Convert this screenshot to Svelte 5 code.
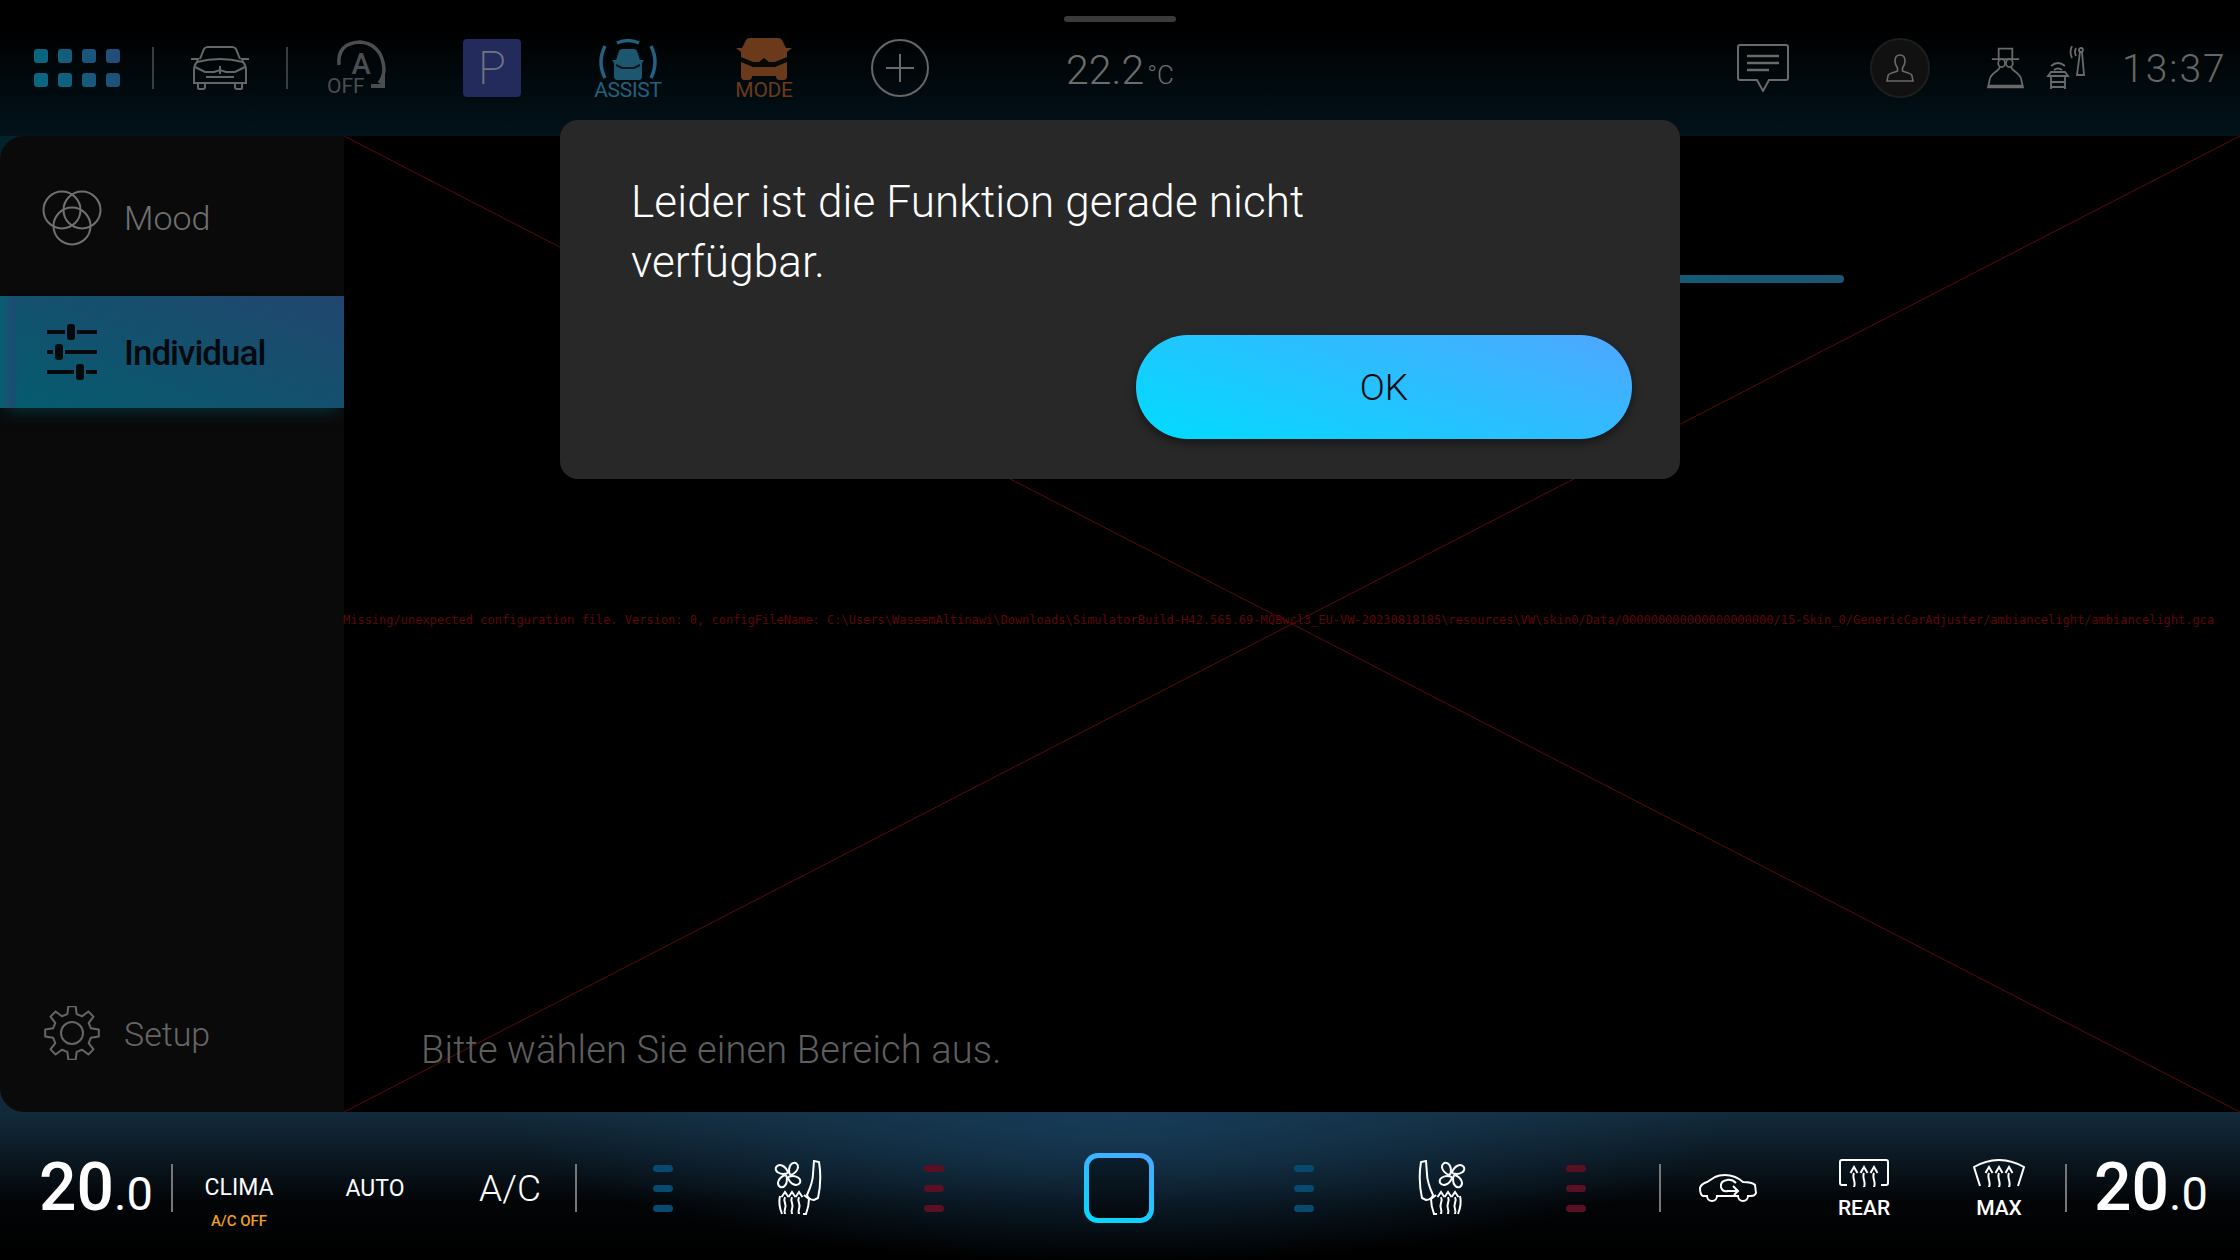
<script>
	const errorText =
		'Missing/unexpected configuration file. Version: 0, configFileName: C:\\Users\\WaseemAltinawi\\Downloads\\SimulatorBuild-H42.565.69-MQBwcl3_EU-VW-20230818185\\resources\\VW\\skin0/Data/000000000000000000000/15-Skin_0/GenericCarAdjuster/ambiancelight/ambiancelight.gca';

	const grid = [];
	for (const y of [0, 24]) for (const x of [0, 24, 48, 72]) grid.push({ x, y });

	// gear outline, 8 teeth
	function gearPoints() {
		const pts = [];
		const teeth = 8;
		for (let i = 0; i < teeth; i++) {
			const a = (i / teeth) * Math.PI * 2 - Math.PI / 2;
			const w = Math.PI / teeth;
			for (const [r, d] of [[19.5, -0.62], [27, -0.34], [27, 0.34], [19.5, 0.62]]) {
				const t = a + d * w;
				pts.push((28 + r * Math.cos(t)).toFixed(1) + ',' + (27 + r * Math.sin(t)).toFixed(1));
			}
		}
		return pts.join(' ');
	}
	const wave = 'M-3.5 6 L0 0 L3.5 6 M0 6 C-2.5 11 2.5 15 0 20 C-1 23 0 25 0 26';
	const petal = 'M15 13 C9 9 8 3 12 1 C17 0 20 6 17 13 Z';
</script>

<div class="screen">
	<header class="top">
		<div class="handle"></div>
		<div class="slot start apps">
			<svg width="86" height="38" viewBox="0 0 86 38">
				<defs>
					<linearGradient id="appsGrad" gradientUnits="userSpaceOnUse" x1="0" y1="38" x2="86" y2="0">
						<stop offset="0" stop-color="#066a80" />
						<stop offset="1" stop-color="#234c78" />
					</linearGradient>
				</defs>
				{#each grid as g}
					<rect x={g.x} y={g.y} width="14" height="14" rx="3" fill="url(#appsGrad)" />
				{/each}
			</svg>
		</div>
		<div class="rule dim"></div>
		<div class="slot">
			<svg width="60" height="44" viewBox="0 0 60 44" fill="none" stroke="#666" stroke-width="2">
				<path d="M10 13 L14 3 Q15 1 18 1 H42 Q45 1 46 3 L50 13 M1 13 H8 L7 16 M59 13 H52 L53 16" />
				<path d="M7 16 Q4 19 4 24 V37 H56 V24 Q56 19 53 16 Q30 10 7 16 Z" />
				<path d="M5 21 L15 26 H24 L30 24 L36 26 H45 L55 21 M30 20 V28 M8 37 V42 Q8 43 10 43 H13 Q15 43 15 41 V37 M45 37 V41 Q45 43 47 43 H50 Q52 43 52 42 V37 M16 31 H44" />
			</svg>
		</div>
		<div class="rule dim"></div>
		<div class="slot">
			<svg width="60" height="66" viewBox="0 -6 60 66" fill="none">
				<path d="M13 24 Q11 2 34 1 Q56 3 58 28 Q58 36 53 42" stroke="#4a4e50" stroke-width="3.5" />
				<path d="M45 45 H57 V34" stroke="#4a4e50" stroke-width="4" />
				<text x="35" y="33" text-anchor="middle" class="a-glyph">A</text>
				<text x="1" y="52" class="off">OFF</text>
			</svg>
		</div>
		<div class="slot"><div class="park">P</div></div>
		<div class="slot stack assist">
			<svg width="60" height="42" viewBox="0 0 60 42" fill="none">
				<path d="M19 5 Q30 0 41 5 M7 8 Q-1 24 7 40 M53 8 Q61 24 53 40" stroke="#24607f" stroke-width="3.5" />
				<path d="M14 22 H18 L21 13 Q22 11 24 11 H36 Q38 11 39 13 L42 22 H46 L44 25 V38 Q44 42 41 42 H19 Q16 42 16 38 V25 Z" fill="#1d566f" />
				<path d="M18 27 L24 30 H36 L42 27" stroke="#04141c" stroke-width="2" />
			</svg>
			<span class="icon-label">ASSIST</span>
		</div>
		<div class="slot stack mode">
			<svg width="58" height="42" viewBox="0 0 58 42">
				<path d="M1 10 H7 L11 2 Q12 0 15 0 H43 Q46 0 47 2 L51 10 H57 L52 14 V38 Q52 42 49 42 H44 Q41 42 41 38 H17 Q17 42 14 42 H9 Q6 42 6 38 V14 Z" fill="#6b3a1b" />
				<path d="M6 19 L18 24 H24 L29 20 L34 24 H40 L52 19 V24 L40 29 H18 L6 24 Z" fill="#070808" />
			</svg>
			<span class="icon-label">MODE</span>
		</div>
		<div class="slot">
			<div class="plus">
				<svg width="28" height="28" viewBox="0 0 28 28" stroke="#6a6a6a" stroke-width="2"><path d="M0 14 H28 M14 0 V28" /></svg>
			</div>
		</div>
		<div class="slot outside">22.2<small>°C</small></div>
		<div></div>
		<div class="slot">
			<svg width="52" height="48" viewBox="0 0 52 48" fill="none" stroke="#6a6a6a" stroke-width="2">
				<path d="M3 1 H49 Q51 1 51 3 V34 Q51 36 49 36 H32 L26 47 L20 36 H3 Q1 36 1 34 V3 Q1 1 3 1 Z" />
				<path d="M10 12 H42 M10 19 H42 M10 26 H32" stroke-width="2.5" />
			</svg>
		</div>
		<div class="slot">
			<div class="profile">
				<svg width="28" height="28" viewBox="0 0 28 28" fill="none" stroke="#6a6a6a" stroke-width="1.6">
					<path d="M14 1 C10 1 9 4 9 7 C9 10 10 12 11.5 14 V17 C7 19 2 19 2 22 L1 27 H27 L26 22 C26 19 21 19 16.5 17 V14 C18 12 19 10 19 7 C19 4 18 1 14 1 Z" />
				</svg>
			</div>
		</div>
		<div class="slot">
			<svg width="38" height="42" viewBox="0 0 38 42" fill="none" stroke="#6a6a6a" stroke-width="1.8">
				<path d="M12 1 H26 V12 H12 Z M5 12 H33" />
				<ellipse cx="15" cy="16" rx="3.5" ry="4" />
				<ellipse cx="23" cy="16" rx="3.5" ry="4" />
				<path d="M13 20 C13 24 4 26 3 32 L1 41 H37 L35 32 C34 26 25 24 25 20 M1 39 H37" />
			</svg>
		</div>
		<div class="slot">
			<svg width="40" height="44" viewBox="0 0 40 44" fill="none" stroke="#6a6a6a" stroke-width="1.8">
				<path d="M5 20 Q12 14 19 20 M8 24 Q12 21 16 24" />
				<path d="M2 30 H22 L19 26 H5 Z M5 31 V43 M19 31 V43 M5 36 H19 M5 41 H19" />
				<path d="M26 12 Q23 6 26 0 M30 10 Q28 6 30 2" />
				<path d="M34 6 L31 29 H38 L36 6 Z" />
				<circle cx="35" cy="4" r="2" />
			</svg>
		</div>
		<div class="slot start clock">13:37</div>
	</header>

	<div class="middle">
		<aside class="side">
			<div class="item mood">
				<svg class="item-icon" width="60" height="56" viewBox="0 0 60 56" fill="none" stroke="#707070" stroke-width="2">
					<circle cx="20" cy="20" r="18.5" />
					<circle cx="40" cy="20" r="18.5" />
					<circle cx="30" cy="36" r="18.5" />
				</svg>
				<span>Mood</span>
			</div>
			<div class="item active">
				<svg class="item-icon" width="50" height="56" viewBox="0 0 50 56" fill="#03090d">
					<rect x="0" y="6" width="50" height="4" />
					<rect x="0" y="26" width="50" height="4" />
					<rect x="0" y="46" width="50" height="4" />
					<rect x="18" y="4" width="12" height="8" fill="#18506e" />
					<rect x="6" y="24" width="12" height="8" fill="#11566d" />
					<rect x="27" y="44" width="12" height="8" fill="#0f586f" />
					<rect x="20" y="0" width="8" height="16" rx="3" />
					<rect x="8" y="20" width="8" height="16" rx="3" />
					<rect x="29" y="40" width="8" height="16" rx="3" />
				</svg>
				<span>Individual</span>
			</div>
			<div class="item setup">
				<svg class="item-icon" width="56" height="54" viewBox="0 0 56 54" fill="none" stroke="#666" stroke-width="2">
					<polygon points={gearPoints()} stroke-linejoin="round" />
					<circle cx="28" cy="27" r="11" />
				</svg>
				<span>Setup</span>
			</div>
		</aside>

		<main class="canvas">
			<svg class="cross" viewBox="0 0 1896 976" preserveAspectRatio="none">
				<path d="M0 0 L1896 976 M0 976 L1896 0" stroke="#5c0a0a" stroke-width="1" fill="none" />
			</svg>
			<div class="error">{errorText}</div>
			<div class="slider"></div>
			<p class="prompt">Bitte wählen Sie einen Bereich aus.</p>
		</main>
	</div>

	<footer class="climate">
		<div class="temp left">20<small>.0</small></div>
		<div class="rule"></div>
		<div class="slot stack clima"><span class="label">CLIMA</span><span class="acoff">A/C OFF</span></div>
		<div class="slot"><span class="label">AUTO</span></div>
		<div class="slot"><span class="ac">A/C</span></div>
		<div class="rule"></div>
		<div class="slot"><div class="bars blue"><i></i><i></i><i></i></div></div>
		<div class="slot">
			<svg width="50" height="56" viewBox="0 0 50 56" fill="none" stroke="#fff" stroke-width="2">
				{#each [45, 135, 225, 315] as deg}
					<path d={petal} transform="rotate({deg} 15 15)" />
				{/each}
				<path d="M41 1 L46 2 Q49 20 45 38 L41 40 Q36 40 34 35 Q40 22 40 14 Z" />
				{#each [12, 19, 26] as x}
					<path d={wave} transform="translate({x} 32) scale(1 .85)" />
				{/each}
				<path d="M7 36 Q5 44 9 54 M31 35 L36 39 Q36 46 33 54 H30" />
			</svg>
		</div>
		<div class="slot"><div class="bars red"><i></i><i></i><i></i></div></div>
		<div class="slot"><div class="zone"></div></div>
		<div class="slot"><div class="bars blue"><i></i><i></i><i></i></div></div>
		<div class="slot">
			<svg class="mirror" width="50" height="56" viewBox="0 0 50 56" fill="none" stroke="#fff" stroke-width="2">
				{#each [45, 135, 225, 315] as deg}
					<path d={petal} transform="rotate({deg} 15 15)" />
				{/each}
				<path d="M41 1 L46 2 Q49 20 45 38 L41 40 Q36 40 34 35 Q40 22 40 14 Z" />
				{#each [12, 19, 26] as x}
					<path d={wave} transform="translate({x} 32) scale(1 .85)" />
				{/each}
				<path d="M7 36 Q5 44 9 54 M31 35 L36 39 Q36 46 33 54 H30" />
			</svg>
		</div>
		<div class="slot"><div class="bars red"><i></i><i></i><i></i></div></div>
		<div class="rule"></div>
		<div class="slot">
			<svg width="58" height="28" viewBox="0 0 58 28" fill="none" stroke="#fff" stroke-width="2">
				<path d="M1 14 Q2 10 8 8 L16 3 Q20 1 26 1 Q36 1 44 8 Q53 8 56 11 L57 19 Q56 22 52 22 H49 A5 5 0 0 1 39 22 H18 A5 5 0 0 1 8 22 H4 Q1 21 1 14 Z" />
				<path d="M37 9 Q33 5 28 6 Q21 7 22 13 Q23 18 29 17 H38 M34 12 L39 17 L35 21" />
			</svg>
		</div>
		<div class="slot stack defrost">
			<svg width="50" height="28" viewBox="0 0 50 28" fill="none" stroke="#fff" stroke-width="2">
				<path d="M8 26 H3 Q1 26 1 24 V3 Q1 1 3 1 H47 Q49 1 49 3 V24 Q49 26 47 26 H42" />
				{#each [15, 25, 35] as x}
					<path d={wave} transform="translate({x} 8)" />
				{/each}
			</svg>
			<span class="label small">REAR</span>
		</div>
		<div class="slot stack defrost">
			<svg width="52" height="28" viewBox="0 0 52 28" fill="none" stroke="#fff" stroke-width="2">
				<path d="M7 27 L1 8 Q26 -6 51 8 L45 27" />
				{#each [16, 26, 36] as x}
					<path d={wave} transform="translate({x} 8)" />
				{/each}
			</svg>
			<span class="label small">MAX</span>
		</div>
		<div class="rule"></div>
		<div class="temp right">20<small>.0</small></div>
	</footer>

	<div class="dialog">
		<p>Leider ist die Funktion gerade nicht verfügbar.</p>
		<button>OK</button>
	</div>
</div>

<style>
	:global(body) {
		background: #000;
	}

	.screen {
		position: relative;
		width: 2240px;
		height: 1260px;
		display: flex;
		flex-direction: column;
		overflow: hidden;
		font-family: Roboto, 'Noto Sans', sans-serif;
		background: #000;
	}

	.slot {
		display: flex;
		align-items: center;
		justify-content: center;
		min-width: 0;
	}

	.slot.start {
		justify-content: flex-start;
	}

	.stack {
		flex-direction: column;
	}

	.rule {
		width: 2px;
		height: 48px;
		align-self: center;
		background: #777;
	}

	.rule.dim {
		height: 42px;
		background: #3a3d3e;
	}

	/* top bar */
	.top {
		position: relative;
		height: 136px;
		flex: none;
		display: grid;
		grid-template-columns: 152px 2px 132px 2px 136px 136px 136px 136px 136px 304px 441px 100px 174px 37px 84px 132px;
		background: linear-gradient(#000 20%, #02131a);
	}

	.handle {
		position: absolute;
		left: 1064px;
		top: 16px;
		width: 112px;
		height: 6px;
		border-radius: 3px;
		background: #3a3a3a;
	}

	.apps {
		padding-left: 34px;
	}

	.park {
		width: 58px;
		height: 58px;
		border-radius: 4px;
		background: #232a5c;
		color: #72757f;
		font-size: 46px;
		font-weight: 200;
		line-height: 58px;
		text-align: center;
	}

	.a-glyph {
		font-size: 29px;
		font-weight: 500;
		fill: #4a4e50;
	}

	.off {
		font-size: 21px;
		fill: #4a4e50;
	}

	.icon-label {
		font-size: 21px;
		line-height: 18px;
		margin-top: 1px;
		letter-spacing: -0.3px;
	}

	.assist .icon-label {
		color: #24607f;
	}

	.mode .icon-label {
		color: #6b3a1b;
	}

	.plus {
		width: 58px;
		height: 58px;
		border: 2px solid #666;
		border-radius: 50%;
		box-sizing: border-box;
		display: flex;
		align-items: center;
		justify-content: center;
	}

	.outside {
		color: #6c6c6c;
		font-size: 41px;
		font-weight: 300;
		align-items: baseline;
		padding-top: 45px;
		line-height: 50px;
	}

	.outside small {
		font-size: 26px;
		margin-left: 3px;
	}

	.profile {
		width: 60px;
		height: 60px;
		border-radius: 50%;
		background: #111;
		border: 2px solid #1e1e1e;
		display: flex;
		align-items: center;
		justify-content: center;
		box-sizing: border-box;
	}

	.clock {
		color: #666;
		font-size: 39px;
		font-weight: 300;
		letter-spacing: 2px;
		padding: 2px 0 0 14px;
	}

	/* middle */
	.middle {
		flex: 1;
		display: flex;
		min-height: 0;
		background: linear-gradient(#02222c, #13293a);
	}

	.side {
		width: 344px;
		flex: none;
		display: flex;
		flex-direction: column;
		background: #0a0a0a;
		border-radius: 24px 0 0 24px;
	}

	.item {
		position: relative;
		box-sizing: border-box;
		padding-top: 3px;
		display: flex;
		align-items: center;
		color: #707070;
		font-size: 34px;
		font-weight: 300;
	}

	.item-icon {
		position: absolute;
	}

	.item span {
		margin-left: 124px;
	}

	.mood {
		height: 160px;
	}

	.mood .item-icon {
		left: 42px;
		top: 54px;
	}

	.active {
		height: 112px;
		color: #03090d;
		font-size: 35px;
		font-weight: 500;
		letter-spacing: -1px;
		background: linear-gradient(to right, #075f70 0, #1f4a72 14px, transparent 16px), linear-gradient(20deg, #045c6e, #22466e);
		box-shadow: 0 10px 14px -6px rgba(8, 60, 70, 0.7);
	}

	.active .item-icon {
		left: 47px;
		top: 28px;
	}

	.setup {
		margin-top: auto;
		height: 160px;
		color: #666;
	}

	.setup .item-icon {
		left: 44px;
		top: 54px;
	}

	.canvas {
		position: relative;
		flex: 1;
		background: #000;
		display: flex;
		align-items: flex-end;
	}

	.cross {
		position: absolute;
		inset: 0;
		width: 100%;
		height: 100%;
	}

	.error {
		position: absolute;
		left: -1px;
		top: 476px;
		font-family: 'DejaVu Sans Mono', monospace;
		font-size: 12px;
		line-height: 16px;
		white-space: nowrap;
		color: #5e0707;
	}

	.slider {
		position: absolute;
		left: 1200px;
		top: 139px;
		width: 300px;
		height: 8px;
		border-radius: 4px;
		background: linear-gradient(to right, #0a5f78, #1c5674);
	}

	.prompt {
		position: relative;
		margin: 0 0 37px 77px;
		color: #5e5e5e;
		font-size: 38px;
		font-weight: 300;
		line-height: 50px;
		letter-spacing: 0.15px;
	}

	/* climate bar */
	.climate {
		height: 148px;
		box-sizing: border-box;
		padding-top: 4px;
		flex: none;
		display: grid;
		grid-template-rows: 144px;
		grid-template-columns: 171px 2px 132px 140px 130px 2px 171px 99px 174px 196px 174px 101px 167px 2px 134px 138px 132px 2px 172px;
		color: #fff;
		background: radial-gradient(ellipse 620px 150px at 50% 0, #173c58, transparent), linear-gradient(#132b3c, #020406 62%, #000);
	}

	.temp {
		font-size: 66px;
		font-weight: 500;
		line-height: 144px;
	}

	.temp small {
		font-size: 47px;
		font-weight: 400;
	}

	.temp.left {
		padding-left: 39px;
	}

	.temp.right {
		padding-left: 27px;
	}

	.label {
		font-size: 23px;
		line-height: 30px;
		margin-top: 2px;
	}

	.clima {
		padding-top: 25px;
	}

	.acoff {
		color: #f0a020;
		font-size: 15px;
		font-weight: 500;
		line-height: 20px;
		margin-top: 8px;
	}

	.ac {
		font-size: 37px;
		font-weight: 300;
	}

	.bars {
		display: flex;
		flex-direction: column;
		gap: 13px;
	}

	.bars i {
		display: block;
		width: 20px;
		height: 7px;
		border-radius: 4px;
	}

	.blue i {
		background: #064a70;
	}

	.red i {
		background: #5a0f22;
	}

	.zone {
		width: 70px;
		height: 70px;
		box-sizing: border-box;
		border: 5px solid transparent;
		border-radius: 14px;
		background: linear-gradient(#0b1e2d, #04080c) padding-box, linear-gradient(20deg, #00dcff, #4fa6ff) border-box;
	}

	.mirror {
		transform: scaleX(-1);
	}

	.defrost {
		padding-top: 3px;
	}

	.defrost .label.small {
		font-size: 21px;
		font-weight: 500;
		line-height: 26px;
		margin-top: 8px;
	}

	/* dialog */
	.dialog {
		position: absolute;
		left: 560px;
		top: 120px;
		width: 1120px;
		height: 359px;
		box-sizing: border-box;
		padding: 0 48px 40px 71px;
		border-radius: 18px;
		background: #282828;
		display: flex;
		flex-direction: column;
	}

	.dialog p {
		margin: 52px 0 0;
		width: 760px;
		color: #fff;
		font-size: 44px;
		font-weight: 300;
		line-height: 60px;
		letter-spacing: 0.12px;
	}

	.dialog button {
		margin-top: auto;
		align-self: flex-end;
		width: 496px;
		height: 104px;
		border: none;
		border-radius: 52px;
		background: linear-gradient(20deg, #00dcff, #4fa6ff);
		box-shadow: 0 4px 10px rgba(0, 0, 0, 0.45);
		color: #03090d;
		font: inherit;
		font-size: 37px;
		font-weight: 300;
	}
</style>
